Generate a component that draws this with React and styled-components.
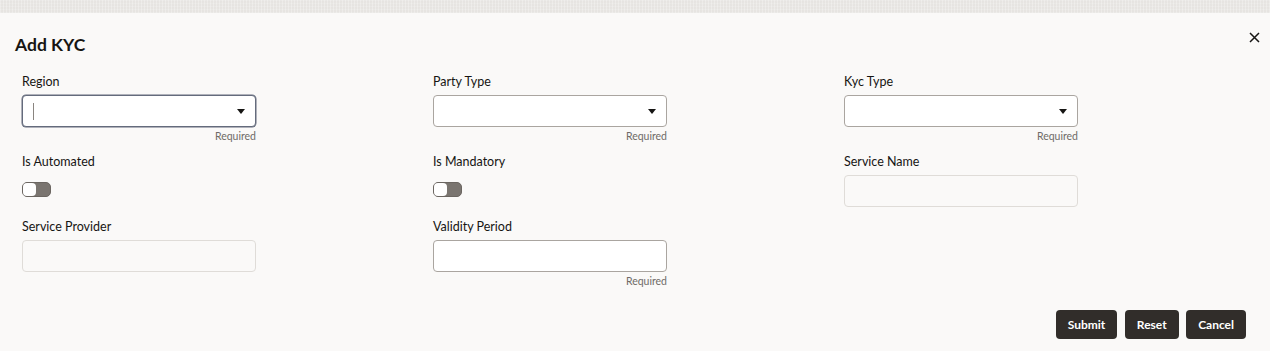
import React from "react";
import styled, { createGlobalStyle } from "styled-components";

const GlobalStyle = createGlobalStyle`
  html, body {
    margin: 0;
    padding: 0;
    background: #faf9f8;
  }
  body {
    font-family: Lato, "Noto Sans", sans-serif;
    color: #161513;
  }
`;

const Page = styled.div`
  width: 1270px;
  height: 351px;
  display: flex;
  flex-direction: column;
  background: #faf9f8;
  overflow: hidden;
`;

const TopBand = styled.div`
  height: 13px;
  flex: none;
  background-color: #e9e7e4;
  background-image: repeating-linear-gradient(
      90deg,
      rgba(255, 255, 255, 0.18) 0 1px,
      rgba(0, 0, 0, 0.012) 1px 3px
    ),
    repeating-linear-gradient(
      0deg,
      rgba(255, 255, 255, 0.15) 0 1px,
      transparent 1px 3px
    );
`;

const Header = styled.div`
  display: flex;
  justify-content: space-between;
  align-items: flex-start;
  padding: 20px 10px 0 15px;
`;

const Title = styled.h2`
  margin: 0;
  font-size: 17.5px;
  line-height: 24px;
  font-weight: 700;
  color: #161513;
`;

const CloseButton = styled.button`
  border: 0;
  background: none;
  padding: 0;
  margin-top: -2px;
  width: 12px;
  height: 12px;
  display: flex;
  align-items: center;
  justify-content: center;
  cursor: pointer;
`;

const FormGrid = styled.div`
  display: grid;
  grid-template-columns: repeat(3, 234px);
  column-gap: 177px;
  row-gap: 12px;
  padding: 17px 0 0 22px;
`;

const Field = styled.div`
  display: flex;
  flex-direction: column;
`;

const Label = styled.label`
  font-size: 12.5px;
  line-height: 16px;
  margin-bottom: 5px;
  color: #161513;
`;

const InputBox = styled.div`
  height: 32px;
  box-sizing: border-box;
  border-radius: 4px;
  border: 1px solid
    ${({ $focused, $readonly }) =>
      $focused ? "#646b7c" : $readonly ? "#dfdcd8" : "#aaa5a0"};
  box-shadow: ${({ $focused }) => ($focused ? "0 0 0 0.5px #646b7c" : "none")};
  background: ${({ $readonly }) => ($readonly ? "#faf9f8" : "#ffffff")};
  display: flex;
  align-items: center;
  padding: 0 10px;
`;

const Caret = styled.span`
  width: 1px;
  height: 17px;
  background: #8a8580;
`;

const Arrow = styled.span`
  margin-left: auto;
  width: 0;
  height: 0;
  border-left: 4.5px solid transparent;
  border-right: 4.5px solid transparent;
  border-top: 5px solid #161513;
`;

const Helper = styled.div`
  text-align: right;
  font-size: 10.5px;
  line-height: 12px;
  margin-top: 3px;
  color: #6f6b67;
`;

const ToggleRow = styled.div`
  height: 32px;
  display: flex;
  align-items: flex-start;
  padding-top: 7px;
  box-sizing: border-box;
`;

const Track = styled.div`
  width: 29px;
  height: 15px;
  box-sizing: border-box;
  border-radius: 5px;
  background: #7a7570;
  border: 1px solid #6b6661;
  display: flex;
  align-items: stretch;
`;

const Knob = styled.div`
  width: 13px;
  border-radius: 4px;
  background: #ffffff;
`;

const Footer = styled.div`
  margin-top: auto;
  display: flex;
  justify-content: flex-end;
  gap: 7.5px;
  padding: 0 24px 12px 0;
`;

const Button = styled.button`
  height: 29px;
  padding: 0 12px;
  border: 0;
  border-radius: 4px;
  background: #312d2a;
  color: #ffffff;
  font-family: Lato, "Noto Sans", sans-serif;
  font-size: 12px;
  font-weight: 700;
  cursor: pointer;
`;

const Toggle = () => (
  <ToggleRow>
    <Track>
      <Knob />
    </Track>
  </ToggleRow>
);

const TextField = ({ label, select, focused, readonly, required }) => (
  <Field>
    <Label>{label}</Label>
    <InputBox $focused={focused} $readonly={readonly}>
      {focused && <Caret />}
      {select && <Arrow />}
    </InputBox>
    {required && <Helper>Required</Helper>}
  </Field>
);

const ToggleField = ({ label }) => (
  <Field>
    <Label>{label}</Label>
    <Toggle />
  </Field>
);

export default function App() {
  return (
    <Page>
      <GlobalStyle />
      <TopBand />
      <Header>
        <Title>Add KYC</Title>
        <CloseButton aria-label="Close">
          <svg width="11" height="11" viewBox="0 0 11 11">
            <path
              d="M1 1 L10 10 M10 1 L1 10"
              stroke="#161513"
              strokeWidth="1.5"
              fill="none"
            />
          </svg>
        </CloseButton>
      </Header>
      <FormGrid>
        <TextField label="Region" select focused required />
        <TextField label="Party Type" select required />
        <TextField label="Kyc Type" select required />
        <ToggleField label="Is Automated" />
        <ToggleField label="Is Mandatory" />
        <TextField label="Service Name" readonly />
        <TextField label="Service Provider" readonly />
        <TextField label="Validity Period" required />
      </FormGrid>
      <Footer>
        <Button>Submit</Button>
        <Button>Reset</Button>
        <Button>Cancel</Button>
      </Footer>
    </Page>
  );
}
